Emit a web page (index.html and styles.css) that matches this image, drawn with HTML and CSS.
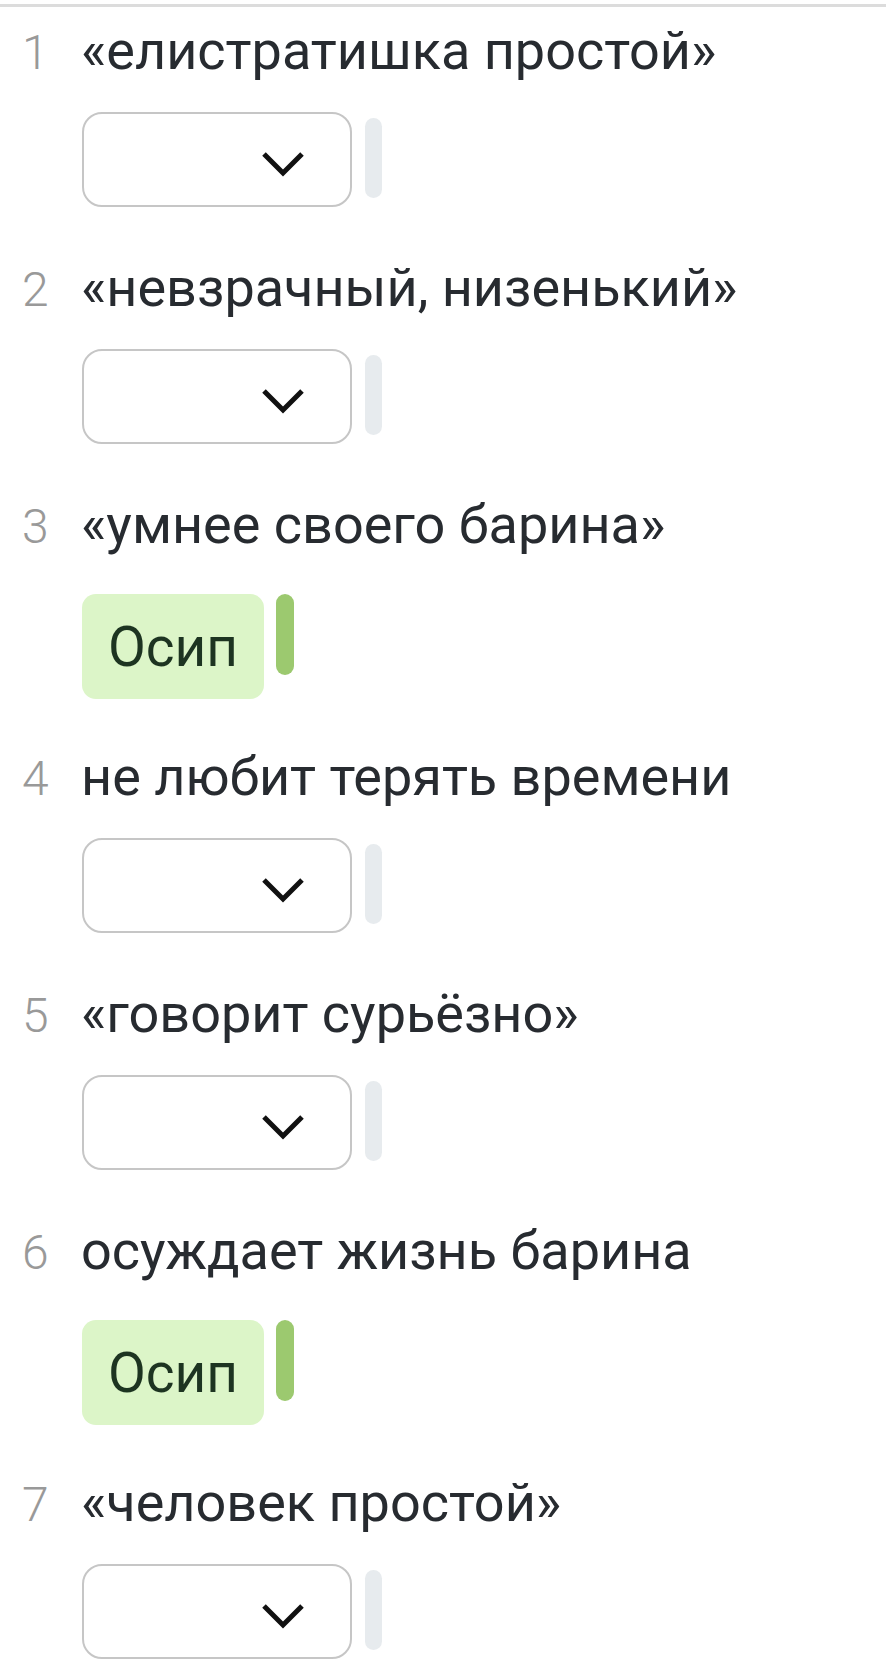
FILE: index.html
```html
<!DOCTYPE html>
<html lang="ru">

<head>
    <meta charset="UTF-8">
    <title>Персонажи</title>
    <link rel="stylesheet" href="styles.css">
</head>

<body>
    <div class="divider"></div>
    <div class="list">
        <div class="item">
            <div class="q"><span class="num">1</span><span class="text">«елистратишка простой»</span></div>
            <div class="answer">
                <div class="select"><svg class="chev" width="44" height="26" viewBox="0 0 44 26"><path d="M3 3 L22 22 L41 3" /></svg></div>
                <span class="mark"></span>
            </div>
        </div>
        <div class="item">
            <div class="q"><span class="num">2</span><span class="text">«невзрачный, низенький»</span></div>
            <div class="answer">
                <div class="select"><svg class="chev" width="44" height="26" viewBox="0 0 44 26"><path d="M3 3 L22 22 L41 3" /></svg></div>
                <span class="mark"></span>
            </div>
        </div>
        <div class="item">
            <div class="q"><span class="num">3</span><span class="text">«умнее своего барина»</span></div>
            <div class="answer done">
                <div class="chip">Осип</div>
                <span class="mark ok"></span>
            </div>
        </div>
        <div class="item">
            <div class="q"><span class="num">4</span><span class="text">не любит терять времени</span></div>
            <div class="answer">
                <div class="select"><svg class="chev" width="44" height="26" viewBox="0 0 44 26"><path d="M3 3 L22 22 L41 3" /></svg></div>
                <span class="mark"></span>
            </div>
        </div>
        <div class="item">
            <div class="q"><span class="num">5</span><span class="text">«говорит сурьёзно»</span></div>
            <div class="answer">
                <div class="select"><svg class="chev" width="44" height="26" viewBox="0 0 44 26"><path d="M3 3 L22 22 L41 3" /></svg></div>
                <span class="mark"></span>
            </div>
        </div>
        <div class="item">
            <div class="q"><span class="num">6</span><span class="text">осуждает жизнь барина</span></div>
            <div class="answer done">
                <div class="chip">Осип</div>
                <span class="mark ok"></span>
            </div>
        </div>
        <div class="item">
            <div class="q"><span class="num">7</span><span class="text">«человек простой»</span></div>
            <div class="answer">
                <div class="select"><svg class="chev" width="44" height="26" viewBox="0 0 44 26"><path d="M3 3 L22 22 L41 3" /></svg></div>
                <span class="mark"></span>
            </div>
        </div>
    </div>
</body>
</html>
```

FILE: styles.css
```css
* {
    padding: 0;
    margin: 0;
    box-sizing: border-box;
}

body {
    background: #fff;
    font-family: Roboto, "Noto Sans", sans-serif;
    color: #272b30;
    overflow: hidden;
}

.divider {
    height: 3px;
    margin-top: 4px;
    background: #dcdcdc;
}

.list {
    padding-top: 14px;
}

.q {
    display: flex;
    align-items: baseline;
    height: 60px;
    line-height: 60px;
    font-size: 54px;
    white-space: nowrap;
}

.num {
    width: 81px;
    padding-left: 22px;
    color: #999;
    font-size: 48px;
    font-weight: 300;
}

.answer {
    display: flex;
    align-items: flex-start;
    padding: 31px 0 51px 82px;
}

.answer.done {
    padding-top: 39px;
    padding-bottom: 48px;
}

.select {
    width: 270px;
    height: 95px;
    border: 2px solid #c6c6c6;
    border-radius: 20px;
    display: flex;
    align-items: center;
    justify-content: flex-end;
    padding: 8px 45px 0 0;
}

.chev path {
    fill: none;
    stroke: #111;
    stroke-width: 5;
}

.mark {
    width: 17px;
    height: 80px;
    margin: 6px 0 0 13px;
    border-radius: 9px;
    background: #e7ebee;
}

.chip {
    width: 182px;
    height: 105px;
    border-radius: 14px;
    background: #dcf5c8;
    color: #1d3421;
    font-size: 55px;
    display: flex;
    align-items: center;
    justify-content: center;
}

.mark.ok {
    width: 18px;
    height: 81px;
    margin: 0 0 0 12px;
    background: #9cc96f;
}
```
